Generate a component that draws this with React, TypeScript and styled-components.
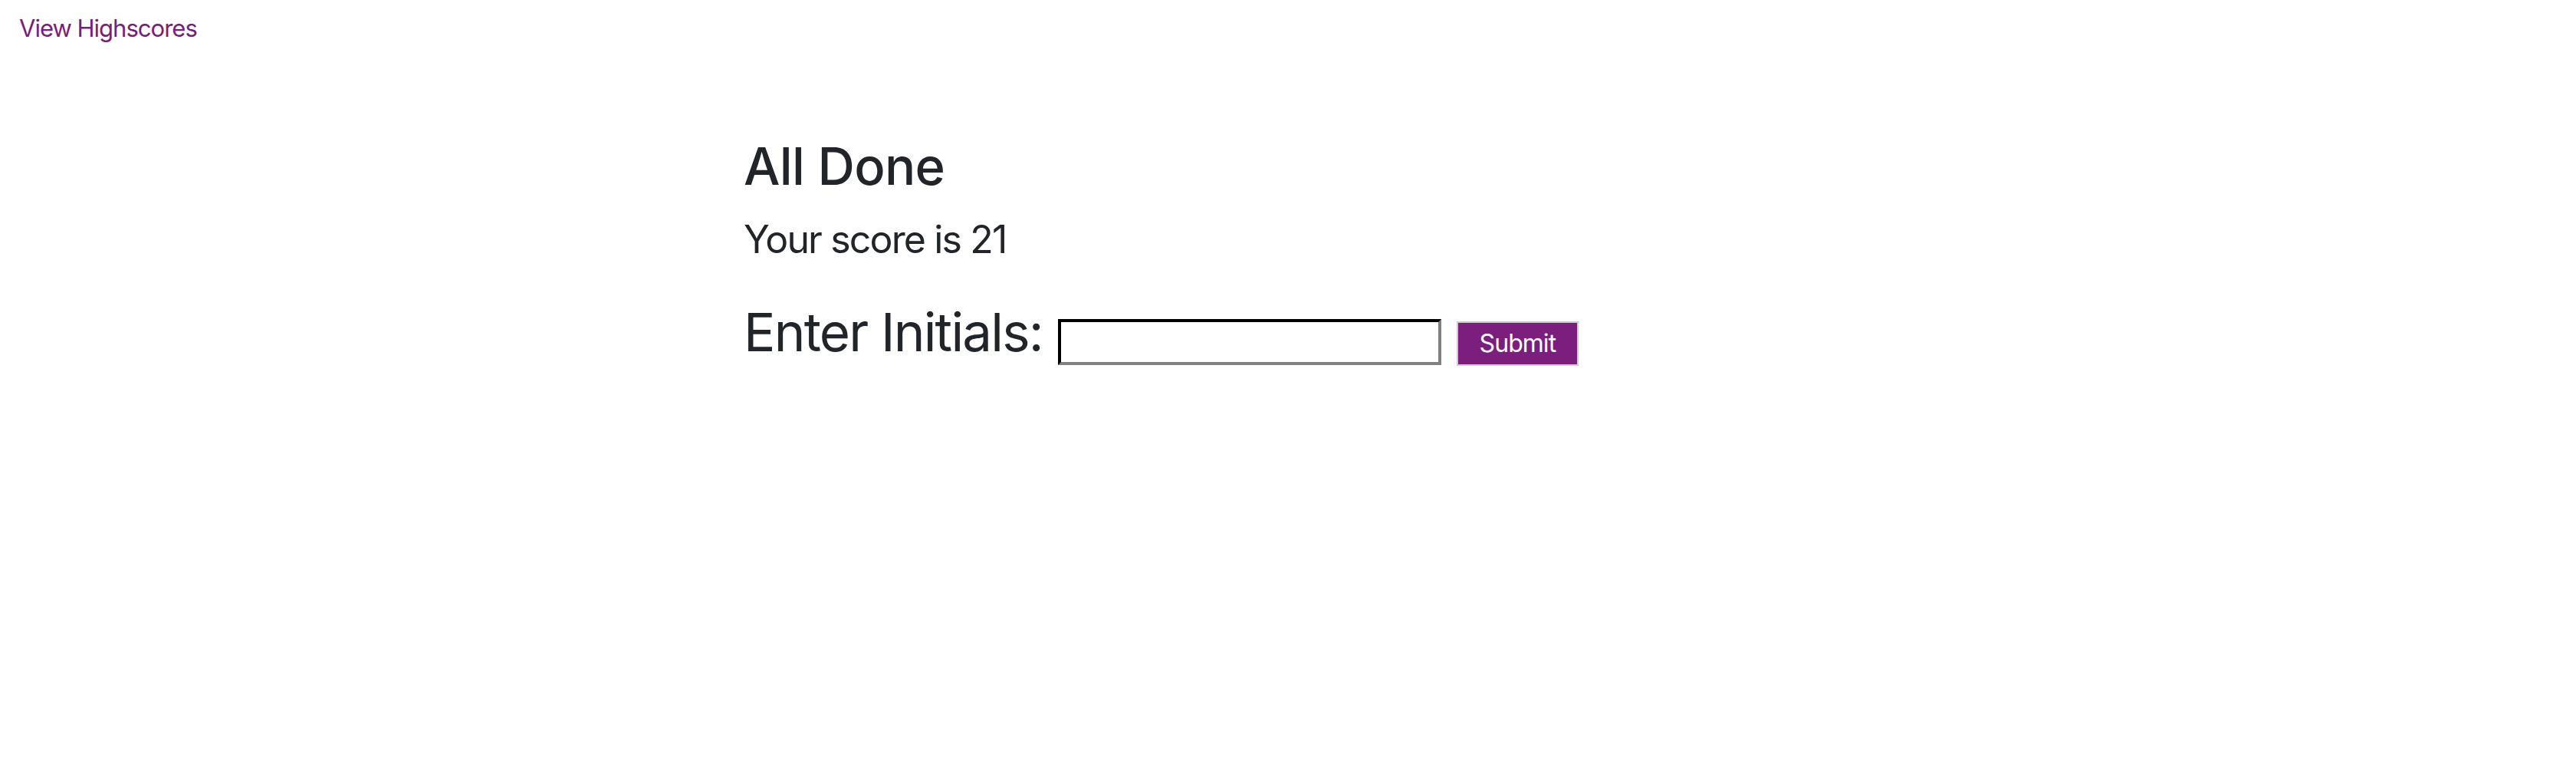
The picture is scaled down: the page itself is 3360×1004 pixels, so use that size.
import React from "react";
import styled, { createGlobalStyle } from "styled-components";

const Global = createGlobalStyle`
  html, body { margin: 0; padding: 0; background: #ffffff; }
  body { font-family: Inter, "Noto Sans", "Liberation Sans", sans-serif; color: #212529; }
  * { box-sizing: border-box; }
`;

const Page = styled.div`
  min-height: 1004px;
  display: flex;
  flex-direction: column;
`;

const TopBar = styled.nav`
  padding: 18px 0 0 25px;
  display: flex;
`;

const HighscoreLink = styled.a`
  font-size: 31px;
  line-height: 1.2;
  letter-spacing: -0.032em;
  color: #7a1c7c;
  text-decoration: none;
  cursor: pointer;
`;

const Container = styled.main`
  width: 1420px;
  margin: 0 auto;
  padding-top: 122px;
  display: flex;
  flex-direction: column;
`;

const Title = styled.h1`
  margin: 0;
  font-size: 67px;
  font-weight: 500;
  line-height: 1.2;
  letter-spacing: -0.01em;
`;

const Score = styled.p`
  margin: 24px 0 0;
  font-size: 50px;
  font-weight: 400;
  line-height: 1.2;
  letter-spacing: -0.037em;
`;

const Form = styled.form`
  margin-top: 50px;
  display: flex;
  align-items: flex-start;
  gap: 20px;
`;

const Label = styled.label`
  font-size: 69px;
  line-height: 1.2;
  font-weight: 400;
  letter-spacing: -0.026em;
`;

const Input = styled.input<{ $offset: number }>`
  margin-top: ${(p) => p.$offset}px;
  width: 500px;
  height: 60px;
  border: 4px inset;
  border-color: #2b2b2b #808080 #808080 #2b2b2b;
  background: #fff;
  font-size: 30px;
  padding: 0 8px;
  outline: none;
`;

const SubmitButton = styled.button<{ $offset: number }>`
  margin-top: ${(p) => p.$offset}px;
  width: 159px;
  height: 58px;
  background: #7b1e7e;
  color: #ffffff;
  border: 2px solid #cccccc;
  font-family: Inter, "Noto Sans", "Liberation Sans", sans-serif;
  font-size: 32px;
  letter-spacing: -0.03em;
  line-height: 1;
  padding: 0;
  cursor: pointer;
`;

export default function App() {
  return (
    <Page>
      <Global />
      <TopBar>
        <HighscoreLink>View Highscores</HighscoreLink>
      </TopBar>
      <Container>
        <Title>All Done</Title>
        <Score>Your score is 21</Score>
        <Form onSubmit={(e) => e.preventDefault()}>
          <Label htmlFor="initials">Enter Initials:</Label>
          <Input id="initials" type="text" $offset={24} />
          <SubmitButton type="submit" $offset={27}>Submit</SubmitButton>
        </Form>
      </Container>
    </Page>
  );
}
